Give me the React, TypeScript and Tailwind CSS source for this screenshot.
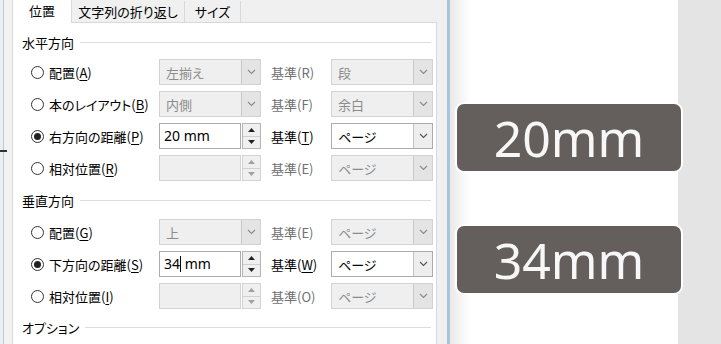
import React from 'react';

const jp = "font-['Noto_Sans_CJK_JP','Noto_Sans',sans-serif] [font-feature-settings:'palt']";

function Mn({ k }: { k: string }) {
  return (
    <>
      (<span className="underline underline-offset-2">{k}</span>)
    </>
  );
}

function Radio({ checked }: { checked?: boolean }) {
  return (
    <div className="w-[13px] h-[13px] rounded-full border border-[#333] bg-white flex items-center justify-center shrink-0">
      {checked && <div className="w-[7px] h-[7px] rounded-full bg-[#222]" />}
    </div>
  );
}

function Chevron({ disabled }: { disabled?: boolean }) {
  return (
    <svg width="9" height="6" viewBox="0 0 9 6">
      <path d="M1 1 L4.5 4.5 L8 1" fill="none" stroke={disabled ? '#8a8a8a' : '#555'} strokeWidth="1.1" />
    </svg>
  );
}

function Combo({ text, disabled }: { text: string; disabled?: boolean }) {
  return (
    <div
      className={`w-[102px] h-[26px] flex border ${
        disabled ? 'border-[#d3d3d3] bg-[#efefef] text-[#8c8c8c]' : 'border-[#acacac] bg-white text-black'
      }`}
    >
      <div className="flex-1 pl-[6px] flex items-center">{text}</div>
      <div
        className={`w-[19px] flex items-center justify-center border-l ${
          disabled ? 'border-[#c9c9c9] bg-[#e4e4e4]' : 'border-[#c2c2c2] bg-[#eeeeee]'
        }`}
      >
        <Chevron disabled={disabled} />
      </div>
    </div>
  );
}

function Spin({ text, disabled, caret }: { text?: string; disabled?: boolean; caret?: boolean }) {
  const tri = disabled ? 'fill-[#a0a0a0]' : 'fill-[#222]';
  return (
    <div className="w-[102px] h-[26px] flex gap-[1px]">
      <div
        className={`w-[82px] border flex items-center pl-[4px] ${
          disabled ? 'border-[#d3d3d3] bg-[#efefef]' : 'border-[#acacac] bg-white text-black'
        } font-['Noto_Sans','Liberation_Sans',sans-serif] text-[14px]`}
      >
        {caret ? (
          <>
            34<span className="inline-block w-[1px] h-[16px] bg-black" />
            &nbsp;mm
          </>
        ) : (
          text
        )}
      </div>
      <div className={`w-[19px] flex flex-col border ${disabled ? 'border-[#d3d3d3] bg-[#efefef]' : 'border-[#b5b5b5] bg-[#f0f0f0]'}`}>
        <div className="flex-1 flex items-center justify-center border-b border-[#d0d0d0]">
          <svg width="7" height="4" viewBox="0 0 7 4">
            <path d="M0 4 L3.5 0 L7 4 Z" className={tri} />
          </svg>
        </div>
        <div className="flex-1 flex items-center justify-center">
          <svg width="7" height="4" viewBox="0 0 7 4">
            <path d="M0 0 L3.5 4 L7 0 Z" className={tri} />
          </svg>
        </div>
      </div>
    </div>
  );
}

function Row({
  checked,
  label,
  control,
  base,
  baseOn,
  right,
}: {
  checked?: boolean;
  label: React.ReactNode;
  control: React.ReactNode;
  base: React.ReactNode;
  baseOn?: boolean;
  right: React.ReactNode;
}) {
  return (
    <div className="h-[32px] flex items-center pl-[18px]">
      <div className="w-[128px] flex items-center gap-[5px]">
        <Radio checked={checked} />
        <span className="text-black whitespace-nowrap">{label}</span>
      </div>
      {control}
      <div className={`w-[70px] pl-[10px] whitespace-nowrap ${baseOn ? 'text-black' : 'text-[#6f6f6f]'}`}>{base}</div>
      {right}
    </div>
  );
}

function Header({ title, className = '' }: { title: string; className?: string }) {
  return (
    <div className={`h-[20px] flex items-center pl-[9px] pr-[5px] gap-[6px] ${className}`}>
      <span className="text-black whitespace-nowrap">{title}</span>
      <div className="flex-1 h-[1px] bg-[#dcdcdc]" />
    </div>
  );
}

export default function App() {
  return (
    <div className={`relative w-[721px] h-[344px] overflow-hidden flex bg-[#e6e6e6] text-[13px] leading-none ${jp}`}>
      {/* window edge */}
      <div className="w-[3px] bg-[#eeeeee]" />
      <div className="w-[1px] bg-[#b4cde0]" />
      <div className="w-[8px] bg-[#f2f2f2]" />

      {/* dialog */}
      <div className="w-[435px] flex bg-[#f0f0f0]">
        <div className="w-[425px] flex flex-col">
          {/* tabs */}
          <div className="h-[23px] flex items-end">
            <div className="w-[60px] h-[23px] bg-white border-l border-r border-[#d9d9d9] flex items-center justify-center pb-[2px]">
              位置
            </div>
            <div className="w-[113px] h-[22px] bg-[#f0f0f0] border-r border-b border-[#d9d9d9] flex items-center justify-center pb-[1px]">
              文字列の折り返し
            </div>
            <div className="w-[56px] h-[22px] bg-[#f0f0f0] border-r border-b border-[#d9d9d9] flex items-center justify-center pb-[1px]">
              サイズ
            </div>
            <div className="flex-1 h-[22px] border-b border-[#d9d9d9]" />
          </div>

          {/* panel */}
          <div className="flex-1 bg-white border-l border-r border-[#d9d9d9] pt-[9px]">
            <Header title="水平方向" />
            <div className="mt-[4px]">
              <Row label={<>配置<Mn k="A" /></>} control={<Combo text="左揃え" disabled />} base="基準(R)" right={<Combo text="段" disabled />} />
              <Row label={<>本のレイアウト<Mn k="B" /></>} control={<Combo text="内側" disabled />} base="基準(F)" right={<Combo text="余白" disabled />} />
              <Row checked label={<>右方向の距離<Mn k="P" /></>} control={<Spin text="20 mm" />} baseOn base={<>基準<Mn k="T" /></>} right={<Combo text="ページ" />} />
              <Row label={<>相対位置<Mn k="R" /></>} control={<Spin disabled />} base="基準(E)" right={<Combo text="ページ" disabled />} />
            </div>
            <Header title="垂直方向" className="mt-[6px]" />
            <div className="mt-[6px]">
              <Row label={<>配置<Mn k="G" /></>} control={<Combo text="上" disabled />} base="基準(E)" right={<Combo text="ページ" disabled />} />
              <Row checked label={<>下方向の距離<Mn k="S" /></>} control={<Spin caret />} baseOn base={<>基準<Mn k="W" /></>} right={<Combo text="ページ" />} />
              <Row label={<>相対位置<Mn k="I" /></>} control={<Spin disabled />} base="基準(O)" right={<Combo text="ページ" disabled />} />
            </div>
            <Header title="オプション" className="mt-[5px]" />
          </div>
        </div>
      </div>

      {/* window border */}
      <div className="w-[3px] bg-[#a9c5dc]" />

      {/* page */}
      <div className="w-[228px] bg-white flex">
        <div className="w-[20px] bg-gradient-to-r from-[#e9e9e9] to-white" />
      </div>
      <div className="flex-1 bg-[#e4e4e4]" />

      {/* ruler mark */}
      <div className="absolute left-0 top-[150px] w-[7px] h-[2px] bg-[#333]" />

      {/* callouts */}
      <div className="absolute left-[455px] top-[102px] w-[228px] h-[71px] rounded-[9px] border-2 border-white bg-[#645f5c] flex items-center justify-center font-['Noto_Sans','Open_Sans',sans-serif] text-[50px] text-[#f7f7f7] leading-none">
        20mm
      </div>
      <div className="absolute left-[455px] top-[224px] w-[228px] h-[71px] rounded-[9px] border-2 border-white bg-[#645f5c] flex items-center justify-center font-['Noto_Sans','Open_Sans',sans-serif] text-[50px] text-[#f7f7f7] leading-none">
        34mm
      </div>
    </div>
  );
}
